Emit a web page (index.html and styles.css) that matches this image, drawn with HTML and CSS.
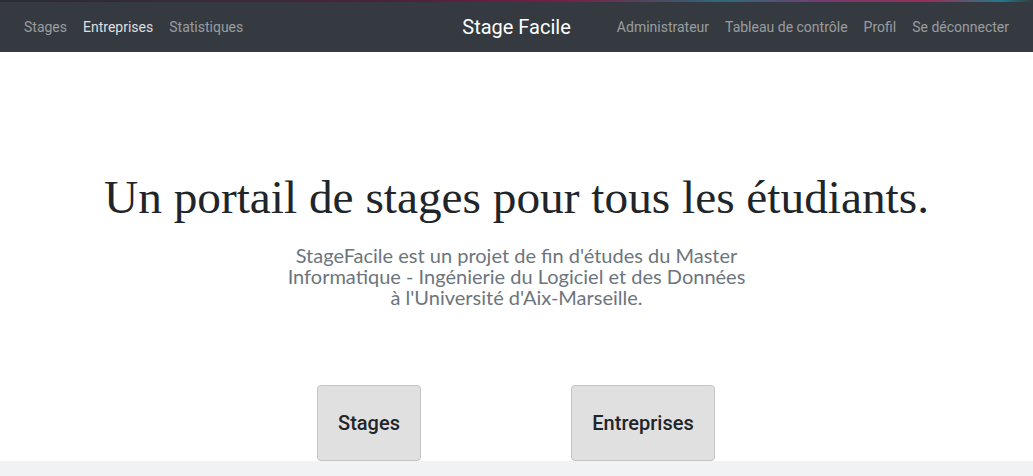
FILE: index.html
```html
<!DOCTYPE html>
<html lang="fr">
<head>
<meta charset="utf-8">
<title>Stage Facile</title>
<link rel="stylesheet" href="styles.css">
</head>
<body>
<header class="navbar">
  <div class="strip"></div>
  <nav class="bar">
    <ul class="nav nav-left">
      <li><a href="#">Stages</a></li>
      <li><a href="#" class="active">Entreprises</a></li>
      <li><a href="#">Statistiques</a></li>
    </ul>
    <a class="brand" href="#">Stage Facile</a>
    <ul class="nav nav-right">
      <li><a href="#">Administrateur</a></li>
      <li><a href="#">Tableau de contrôle</a></li>
      <li><a href="#">Profil</a></li>
      <li><a href="#">Se déconnecter</a></li>
    </ul>
  </nav>
</header>
<main class="hero">
  <h1 class="title">Un portail de stages pour tous les étudiants.</h1>
  <p class="lead">StageFacile est un projet de fin d'études du Master<br>Informatique - Ingénierie du Logiciel et des Données<br>à l'Université d'Aix-Marseille.</p>
  <div class="actions">
    <a class="btn btn-stages" href="#">Stages</a>
    <a class="btn btn-entreprises" href="#">Entreprises</a>
  </div>
</main>
<footer class="footer"></footer>
</body>
</html>
```

FILE: styles.css
```css
* { box-sizing: border-box; }
html, body { margin: 0; padding: 0; }
body {
  background: #fff;
  font-family: Roboto, "Liberation Sans", sans-serif;
  color: #212529;
}
a { text-decoration: none; }

.navbar { background: #343a40; }
.strip {
  height: 2px;
  background: linear-gradient(90deg, #2b2d33 0%, #3a2a34 20%, #4a2238 38%, #7a1f44 55%, #2a6a7a 70%, #7a3a70 80%, #9a2f5a 90%, #1f7b8a 97%, #343a40 100%);
}
.bar {
  display: grid;
  grid-template-columns: 1fr auto 1fr;
  align-items: center;
  height: 50px;
  padding: 0 16px;
}
.nav {
  list-style: none;
  margin: 0;
  padding: 0;
  display: flex;
}
.nav-right { justify-content: flex-end; }
.nav a {
  display: block;
  padding: 8px;
  font-size: 14px;
  color: rgba(255,255,255,0.5);
}
.nav a.active { color: rgba(255,255,255,0.85); }
.brand {
  font-size: 20px;
  color: #fff;
}

.hero {
  height: 409px;
  display: flex;
  flex-direction: column;
  align-items: center;
  padding-top: 117px;
}
.title {
  margin: 0;
  font-family: "Liberation Serif", "DejaVu Serif", serif;
  font-weight: 400;
  font-size: 47.3px;
  line-height: 56px;
  color: #212529;
}
.lead {
  margin: 20px 0 0;
  font-family: Lato, "Open Sans", sans-serif;
  font-size: 20px;
  line-height: 21px;
  color: #6c757d;
  text-align: center;
}
.actions {
  margin-top: auto;
  margin-right: 1px;
  display: flex;
  gap: 150px;
}
.btn {
  display: flex;
  align-items: center;
  justify-content: center;
  height: 76px;
  border: 1px solid #c4c4c4;
  border-radius: 4px;
  background: #e0e0e0;
  color: #212529;
  font-weight: 500;
  font-size: 20px;
}
.btn-stages { width: 104px; }
.btn-entreprises { width: 144px; }

.footer {
  height: 15px;
  background: #f1f2f4;
}
```
